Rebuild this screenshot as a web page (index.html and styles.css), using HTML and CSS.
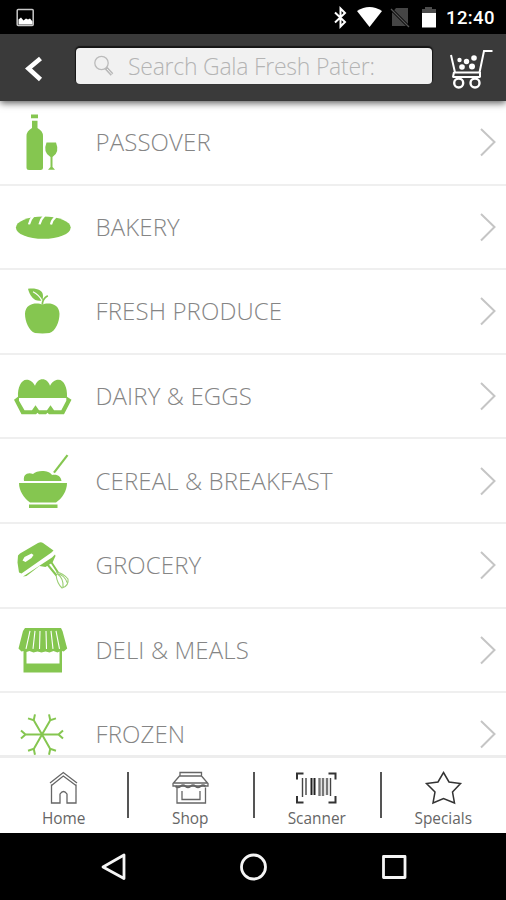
FILE: index.html
```html
<!DOCTYPE html>
<html lang="en">
<head>
<meta charset="utf-8">
<title>Gala Fresh</title>
<link rel="stylesheet" href="styles.css">
</head>
<body>
<div class="status">
  <svg class="status-pic" viewBox="16 8 19 19"><rect x="17.2" y="9.6" width="16" height="16" rx="1" fill="none" stroke="#c8c8c8" stroke-width="1.500"/><path d="M18.500 24.500v-5l2.500-2 2.500 3 2.500-2 2 1 2-1 2.500 3v3z" fill="#fff"/></svg>
  <svg class="status-icons" viewBox="330 4 108 26">
    <path d="M335 12.500l10 9.500-4.500 4.500v-18L345 13l-10 9.500" fill="none" stroke="#fff" stroke-width="2"/>
    <path d="M357 11q12.500-8 25 0L369.500 27z" fill="#fff"/>
    <path d="M396 8h12v18h-16V13z" fill="#454545"/><path d="M391 9l18 18" stroke="#000" stroke-width="3"/><path d="M391 9l18 18" stroke="#555" stroke-width="1.300"/>
    <path d="M422 9h3V7h7v2h4v5h-14z" fill="#4c4c4c"/><path d="M422 13h14v14.500h-14z" fill="#fff"/>
  </svg>
  <span class="clock">12:40</span>
</div>
<header class="header">
  <svg class="back" viewBox="0 34 76 66"><path d="M40.500 58.500L28.500 68.500l12 11" fill="none" stroke="#fff" stroke-width="4.600"/></svg>
  <div class="search">
    <svg class="lens" viewBox="92 54 24 25"><circle cx="101.500" cy="64" r="6.700" fill="none" stroke="#bbb" stroke-width="1.300"/><path d="M106 69l6 6.500" stroke="#b8b8b8" stroke-width="3.600"/><path d="M107 70l5 5.500" stroke="#f1f1f1" stroke-width="1"/></svg>
    <span class="query">Search Gala Fresh Pater:</span>
  </div>
  <svg class="cart" viewBox="432 34 74 66"><g fill="none" stroke="#fff" stroke-width="2"><path d="M451 55l4 17.500M492.500 51h-8.500L479.500 72.500M454 72.500h26M452.500 77h28"/><path d="M454 72l-1 5M480 72v5" /><circle cx="458.700" cy="83" r="4.500" stroke-width="2.400"/><circle cx="475" cy="83" r="4.500" stroke-width="2.400"/></g><g fill="#fff"><circle cx="459.500" cy="60" r="2.200"/><circle cx="466.500" cy="61.500" r="2.700"/><circle cx="474" cy="58" r="2.800"/><circle cx="462" cy="67" r="2.800"/><circle cx="472" cy="66.500" r="3"/></g></svg>
</header>
<main class="list">
  <div class="row">
    <svg class="pic" viewBox="0 100.500 90 82"><path d="M31 114h7v3.800h-7zM32 120.300h5.500v7.200q5.500 3 5.500 8V167q0 2.500-2.500 2.500H29q-2.500 0-2.500-2.500v-31.500q0-5 5.500-8z"/><path d="M46.500 142h9.500q4 10-3.500 14.500v10l2.500 2.800h-7l2.500-2.800v-10Q42.500 152 46.500 142z"/></svg>
    <span class="name">PASSOVER</span><svg class="chev" viewBox="0 0 18 30"><path d="M2 2l13.500 13L2 28.500"/></svg>
  </div>
  <div class="row">
    <svg class="pic" viewBox="0 185.100 90 82"><ellipse cx="43.300" cy="226.700" rx="27.400" ry="11.200"/><path class="cut" d="M29 223.500q1-5 4.500-8.500M39.500 223.500q1-5 5-9M51 223.500q1-4.500 5-8"/></svg>
    <span class="name">BAKERY</span><svg class="chev" viewBox="0 0 18 30"><path d="M2 2l13.500 13L2 28.500"/></svg>
  </div>
  <div class="row">
    <svg class="pic" viewBox="0 270.200 90 82"><path d="M42.300 305c4-2.500 17-2.500 17.200 9 0 8-4 17.500-10 19.300-4 .6-10 .6-14.500 0C29 331 25 322 25 314c.2-11.500 13.500-11.500 17.300-9z"/><path d="M28 289c8-1 15 1 15 7l-.3 4.500C35 303 30 297 28 289z"/><path class="cut thin" d="M33 292q6 3 9 9"/><path d="M42.300 305q0-6 5.500-9" fill="none" stroke="#85c650" stroke-width="1.700"/></svg>
    <span class="name">FRESH PRODUCE</span><svg class="chev" viewBox="0 0 18 30"><path d="M2 2l13.500 13L2 28.500"/></svg>
  </div>
  <div class="row">
    <svg class="pic" viewBox="0 354.300 90 82"><path d="M18 396c-.5-9 3-17 8.500-17 4 0 6.500 2.500 8.500 6 1.500-4 4-6.500 7.500-6.500s6 2.500 7.500 6.500c2-3.500 4.500-6 8.500-6 5.500 0 9 8 8.500 17l4.500 3-7.500 14.500H49l-1.500-1.500-1.500 1.500h-7l-1.500-1.500-1.500 1.500H21.500L14 399z"/><path fill="#fff" d="M19 397.300h47.300v2.700l-5 9.500H54l-3.500-5-3.500 5h-8l-3.500-5-3.500 5h-7.500l-5.500-9.500z"/></svg>
    <span class="name">DAIRY &amp; EGGS</span><svg class="chev" viewBox="0 0 18 30"><path d="M2 2l13.500 13L2 28.500"/></svg>
  </div>
  <div class="row">
    <svg class="pic" viewBox="0 438.900 90 82"><path d="M24 479.800c-1-6 3-9 9-7 4-4 16-4 19 1 6-1 9 2 9.500 6zM19 482h48c0 8-5 15.500-11 19.500H30C24 497 19 490 19 482zM29 503.500h28.500v3.500H29z"/><path d="M54 471.500L67.500 454" stroke="#85c650" stroke-width="2.200"/></svg>
    <span class="name">CEREAL &amp; BREAKFAST</span><svg class="chev" viewBox="0 0 18 30"><path d="M2 2l13.500 13L2 28.500"/></svg>
  </div>
  <div class="row">
    <svg class="pic" viewBox="0 523.500 90 82"><path d="M18 555l2-2 18-10.500q3-1.500 5 0l10.500 7.500-2 2L21.500 573l-2.500-1-1.500-10zM23 576l29-19 3-3 .5 1.500-3 6.500-7 4.500-6-1-13 10z"/><path fill="#fff" d="M22.500 560l2-3.500 7-3.500 2 1.500-2 3-6 4z"/><path d="M47.500 564l9 11M51.500 562l6.500 10" fill="none" stroke="#85c650" stroke-width="2"/><path d="M56 574q1 9 6 13.500 7-2 6-9-5-6-12-7M57 573q7 5 6 14M57 573q8 2 10 9" fill="none" stroke="#9ace72" stroke-width="1.100"/></svg>
    <span class="name">GROCERY</span><svg class="chev" viewBox="0 0 18 30"><path d="M2 2l13.500 13L2 28.500"/></svg>
  </div>
  <div class="row">
    <svg class="pic" viewBox="0 608.100 90 82"><path d="M25 627h36l1.500 3 4.700 17.500-3.500 3-1.700-.5v21.500H23.500V650l-2 .5-3-3L23 630z"/><path fill="#fff" d="M26.500 651l3-1 4 1.500 4-1 4 1 4-1 4 1 4-1.500 4 1.500 2-1v12h-33z"/><path class="cut thin" d="M30 630l-4 18M35 630l-2 18M40 630l-.500 18M46 630l.5 18M51 630l2 18M56 630l3.500 18"/></svg>
    <span class="name">DELI &amp; MEALS</span><svg class="chev" viewBox="0 0 18 30"><path d="M2 2l13.500 13L2 28.500"/></svg>
  </div>
  <div class="row">
    <svg class="pic" viewBox="0 692.700 90 82"><g fill="none" stroke="#85c650" stroke-width="2"><path id="arm" d="M42 734.300h16.500M63 730.300l-4.500 4 4.500 4"/><use href="#arm" transform="rotate(60 42 734.300)"/><use href="#arm" transform="rotate(120 42 734.300)"/><use href="#arm" transform="rotate(180 42 734.300)"/><use href="#arm" transform="rotate(240 42 734.300)"/><use href="#arm" transform="rotate(300 42 734.300)"/></g></svg>
    <span class="name">FROZEN</span><svg class="chev" viewBox="0 0 18 30"><path d="M2 2l13.500 13L2 28.500"/></svg>
  </div>
</main>
<nav class="tabs">
  <div class="tab"><svg viewBox="40 770 46 36"><path d="M50 783l13.300-10.500L77 783M51.500 784.500V803h8.500v-9q3.500-5 7 0v9h9v-18.500"/><path d="M51.500 785.500l11.800-9.500 12.700 9.500"/></svg><span>Home</span></div>
  <div class="tab"><svg viewBox="167.500 770 46 36"><path d="M180.500 772.500H202v3.500h-21.500zM180 776l-6.500 7.500v2.500h35v-2.500l-6.500-7.500zM177.500 787.500v15.500H206v-15.500M182.500 791v8.500h18V791M174 783h34"/><path d="M176 786.300q2.500 2 5 0t5 0 5 0 5 0 5 0 5 0" stroke-width="1.800"/></svg><span>Shop</span></div>
  <div class="tab"><svg viewBox="294.500 770 46 36"><path stroke="#333" stroke-width="2" d="M305 773.500h-6.500v6M330 773.500h7v6M298.500 796v6.500h6.500M330 802.500h7V796"/><path stroke="#444" stroke-width="1.400" d="M304 778v19M307.500 778v17M332 778v18"/><path stroke="#222" stroke-width="2" d="M313 778v17M316 778v17"/><path stroke="#777" stroke-width="2.400" d="M321 778v18M324.500 778v18M328.500 778v17"/></svg><span>Scanner</span></div>
  <div class="tab"><svg viewBox="420.500 770 46 36"><path stroke="#333" stroke-width="1.500" d="M444 772.500l5.500 9.500 11.500 1.500-8 8.500 2 11-11-4.500-10.500 4.500 2-11-8.500-8.500 11.500-1.500z"/></svg><span>Specials</span></div>
</nav>
<footer class="system">
  <svg viewBox="0 833 506 67"><g fill="none" stroke="#f5f5f5" stroke-width="2.800" stroke-linejoin="round"><path d="M124 855v23.500L103 867z"/><circle cx="253.500" cy="867" r="12"/><rect x="383.500" y="856.500" width="21.500" height="21"/></g></svg>
</footer>
</body>
</html>
```
FILE: styles.css
```css
* { box-sizing: border-box; }
body {
  margin: 0;
  width: 506px;
  height: 900px;
  overflow: hidden;
  display: flex;
  flex-direction: column;
  background: #fff;
  font-family: "Open Sans", "Noto Sans", sans-serif;
}
svg { display: block; flex: none; }
.status {
  height: 34px;
  flex: none;
  background: #000;
  display: flex;
  align-items: center;
  padding-left: 16px;
}
.status-pic { width: 19px; height: 19px; }
.status-icons { width: 108px; height: 26px; margin-left: 295px; }
.clock {
  margin-left: 8px;
  padding-top: 2px;
  color: #fff;
  font: 500 18.5px/34px Roboto, sans-serif;
  letter-spacing: 0.4px;
}
.header {
  height: 66.5px;
  flex: none;
  display: flex;
  background: #3a3a3a;
  box-shadow: 0 2px 7px rgba(0, 0, 0, 0.65);
  z-index: 1;
}
.back { width: 76px; height: 66px; }
.search {
  width: 355.5px;
  height: 36px;
  margin-top: 13.5px;
  background: #f1f1f1;
  border-radius: 4px;
  box-shadow: 0 -1px 1px 1px #161616;
  display: flex;
  align-items: center;
  padding-left: 16px;
}
.lens { width: 24px; height: 25px; }
.query {
  margin-left: 12px;
  color: #b4b4b4;
  font-size: 23px;
  font-weight: 300;
  letter-spacing: -0.25px;
  line-height: 36px;
  white-space: nowrap;
}
.cart { width: 74px; height: 66px; }
.list { height: 654.5px; flex: none; overflow: hidden; padding-top: 0.5px; }
.row {
  height: 84.6px;
  border-bottom: 2px solid #efefef;
  display: flex;
  align-items: center;
}
.pic { width: 90px; height: 82px; fill: #85c650; }
.cut { fill: none; stroke: #fff; stroke-width: 2.2; }
.thin { stroke-width: 1.1; }
.name {
  flex: 1;
  padding-left: 5.5px;
  color: #858585;
  font-size: 24px;
  font-weight: 300;
  letter-spacing: 0.12px;
  line-height: 32px;
  white-space: nowrap;
}
.chev { width: 18px; height: 30px; margin-right: 9px; fill: none; stroke: #c5c5c5; stroke-width: 2; }
.tabs {
  height: 78px;
  flex: none;
  border-top: 3px solid #ededed;
  display: flex;
  background: #fff;
}
.tab {
  width: 126.5px;
  padding-top: 12px;
  position: relative;
  display: flex;
  flex-direction: column;
  align-items: center;
  color: #666;
  font-size: 15.4px;
  line-height: 22px;
}
.tab svg { width: 46px; height: 36px; fill: none; stroke: #666; stroke-width: 1.3; }
.tab span { margin-top: 2px; padding-left: 1px; }
.tab + .tab::before {
  content: "";
  position: absolute;
  left: 0;
  top: 14px;
  width: 2px;
  height: 46px;
  background: #555;
}
.system { flex: 1; background: #000; }
.system svg { width: 506px; height: 67px; }
```
